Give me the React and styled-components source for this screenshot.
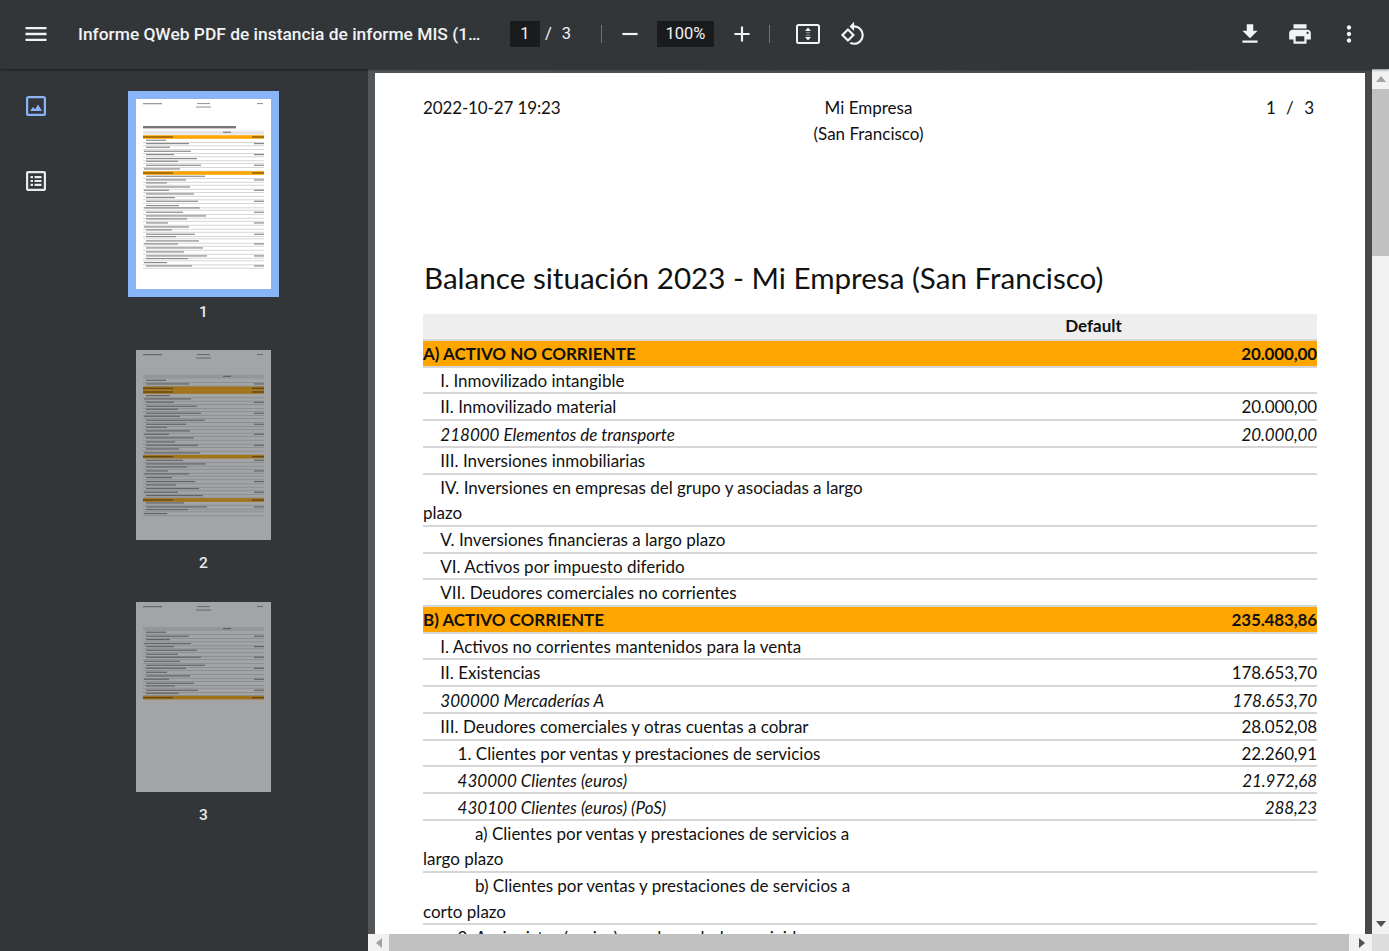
import React from 'react';
import styled, { createGlobalStyle } from 'styled-components';
import { MdMenu, MdRemove, MdAdd, MdRotate90DegreesCcw, MdFileDownload, MdPrint, MdMoreVert } from 'react-icons/md';

const GlobalStyle = createGlobalStyle`
  html, body { margin: 0; height: 100%; overflow: hidden; background: #323639; }
`;

const Viewer = styled.div`
  height: 951px;
  display: flex;
  flex-direction: column;
  font-family: Roboto, sans-serif;
  color: #f1f3f4;
`;

const Toolbar = styled.header`
  height: 69px;
  box-sizing: border-box;
  padding-bottom: 2px;
  flex: none;
  display: flex;
  align-items: center;
  background: #323639;
  box-shadow: 0 1px 2px rgba(0, 0, 0, 0.45);
  position: relative;
  z-index: 2;
`;

const IconSlot = styled.span`
  display: flex;
  flex: none;
  margin-left: ${p => p.$left || 0}px;
  font-size: ${p => p.$size || 26}px;
  color: #f1f3f4;
`;

const Title = styled.div`
  width: 403px;
  margin-left: 28px;
  flex: none;
  font-size: 17.4px;
  font-weight: 500;
  white-space: nowrap;
  overflow: hidden;
  text-overflow: ellipsis;
`;

const Field = styled.span`
  flex: none;
  width: ${p => p.$width}px;
  height: 26px;
  margin-left: ${p => p.$left}px;
  display: flex;
  align-items: center;
  justify-content: center;
  background: #191b1c;
  font-size: 16.5px;
`;

const PageCount = styled.span`
  flex: none;
  margin-left: 5px;
  width: 26px;
  display: flex;
  justify-content: space-between;
  font-size: 16.5px;
`;

const Divider = styled.span`
  flex: none;
  width: 1px;
  height: 18px;
  margin-left: ${p => p.$left}px;
  background: #6f7274;
`;

const Body = styled.div`
  flex: 1;
  min-height: 0;
  display: flex;
`;

const Sidebar = styled.aside`
  width: 368px;
  flex: none;
  display: flex;
  background: #323639;
`;

const SideTabs = styled.nav`
  width: 71px;
  flex: none;
  padding-top: 27px;
  display: flex;
  flex-direction: column;
  align-items: center;
  gap: 55px;
`;

const TabIcon = styled.svg`
  width: 20px;
  height: 20px;
  display: block;
`;

const ThumbList = styled.div`
  width: 265px;
  padding-top: 30px;
  display: flex;
  flex-direction: column;
  align-items: center;
  gap: 29px;
  color: #e8eaed;
`;

const ThumbItem = styled.div`
  display: flex;
  flex-direction: column;
  align-items: center;
`;

const ThumbFrame = styled.div`
  width: 135px;
  height: 190px;
  background: #fff;
  opacity: ${p => (p.$active ? 1 : 0.55)};
  outline: ${p => (p.$active ? '8px solid #8ab4f8' : 'none')};
`;

const ThumbNumber = styled.span`
  margin-top: 14px;
  margin-bottom: ${p => (p.$active ? 0 : 1)}px;
  font-size: 15.5px;
  font-weight: 500;
  line-height: 18px;
`;

const Stage = styled.main`
  flex: 1;
  min-width: 0;
  display: grid;
  grid-template-columns: 1fr 17px;
  grid-template-rows: 1fr 17px;
  background: #525659;
`;

const Scroller = styled.div`
  overflow: hidden;
  padding: 4px 0 0 7px;
  background: linear-gradient(90deg, #525659 0, #46494c 100%);
`;

const Page = styled.article`
  width: 990px;
  height: 900px;
  box-sizing: border-box;
  padding: 22px 48px 0;
  background: #fff;
  color: #111;
  font-family: Lato, sans-serif;
  font-size: 17px;
`;

const PageHead = styled.div`
  display: grid;
  grid-template-columns: 1fr 1fr 1fr;
  line-height: 25.5px;
`;

const HeadDate = styled.div`
  letter-spacing: -0.13px;
`;

const HeadCenter = styled.div`
  text-align: center;
  padding-right: 3px;
`;

const HeadRight = styled.div`
  text-align: right;
  padding-right: 3px;
  word-spacing: 6px;
`;

const DocTitle = styled.h1`
  margin: 112px 0 0 1px;
  font-size: 29.6px;
  line-height: 40px;
  font-weight: 400;
`;

const Sheet = styled.div`
  margin-top: 16px;
`;

const HeadRow = styled.div`
  display: flex;
  height: 25px;
  line-height: 23.5px;
  background: #eee;
  border-bottom: 2px solid #d6d6d6;
  font-weight: 700;
`;

const Row = styled.div`
  display: flex;
  line-height: 25.7px;
  border-bottom: 2px solid #d6d6d6;
  background: ${p => (p.$accent ? '#ffa500' : '#fff')};
  font-weight: ${p => (p.$accent ? 700 : 400)};
  font-style: ${p => (p.$italic ? 'italic' : 'normal')};
`;

const Label = styled.div`
  width: 50%;
  flex: none;
  padding-top: ${p => (p.$italic ? 1 : 0)}px;
  margin-bottom: ${p => (p.$italic ? -2 : -1)}px;
  text-indent: ${p => p.$level * 17.3}px;
`;

const Amount = styled.div`
  width: 50%;
  flex: none;
  text-align: right;
  letter-spacing: -0.15px;
  padding-top: ${p => (p.$italic ? 1 : 0)}px;
  margin-bottom: ${p => (p.$italic ? -2 : -1)}px;
`;

const DefaultCell = styled.div`
  width: 50%;
  margin-left: 50%;
  text-align: center;
`;

const Track = styled.div`
  background: #f1f1f1;
  display: flex;
  flex-direction: ${p => (p.$horizontal ? 'row' : 'column')};
  align-items: stretch;
`;

const Thumb = styled.div`
  background: #c1c1c1;
  ${p => (p.$horizontal ? 'width: 960px;' : 'height: 167px;')}
`;

const Arrow = styled.div`
  flex: none;
  ${p => (p.$horizontal ? 'width: 21px;' : 'height: 20px;')}
  display: flex;
  align-items: center;
  justify-content: center;
  ${p => p.$end && (p.$horizontal ? 'margin-left: auto;' : 'margin-top: auto;')}
`;

const Corner = styled.div`
  background: #dcdcdc;
`;

const rows = [
  { label: 'A) ACTIVO NO CORRIENTE', value: '20.000,00', accent: true },
  { level: 1, label: 'I. Inmovilizado intangible' },
  { level: 1, label: 'II. Inmovilizado material', value: '20.000,00' },
  { level: 1, label: '218000 Elementos de transporte', value: '20.000,00', italic: true },
  { level: 1, label: 'III. Inversiones inmobiliarias' },
  { level: 1, label: 'IV. Inversiones en empresas del grupo y asociadas a largo plazo' },
  { level: 1, label: 'V. Inversiones financieras a largo plazo' },
  { level: 1, label: 'VI. Activos por impuesto diferido' },
  { level: 1, label: 'VII. Deudores comerciales no corrientes' },
  { label: 'B) ACTIVO CORRIENTE', value: '235.483,86', accent: true },
  { level: 1, label: 'I. Activos no corrientes mantenidos para la venta' },
  { level: 1, label: 'II. Existencias', value: '178.653,70' },
  { level: 1, label: '300000 Mercaderías A', value: '178.653,70', italic: true },
  { level: 1, label: 'III. Deudores comerciales y otras cuentas a cobrar', value: '28.052,08' },
  { level: 2, label: '1. Clientes por ventas y prestaciones de servicios', value: '22.260,91' },
  { level: 2, label: '430000 Clientes (euros)', value: '21.972,68', italic: true },
  { level: 2, label: '430100 Clientes (euros) (PoS)', value: '288,23', italic: true },
  { level: 3, label: 'a) Clientes por ventas y prestaciones de servicios a largo plazo' },
  { level: 3, label: 'b) Clientes por ventas y prestaciones de servicios a corto plazo' },
  { level: 2, label: '2. Accionistas (socios) por desembolsos exigidos' },
];

// y of the tiny rows, read off the preview at 3x
const previews = [
  {
    origin: 87,
    accent: [201, 309],
    ys: [212, 222, 233, 245, 255, 267, 275, 287, 298, 320, 331, 340, 352, 362, 373, 384, 395, 408, 415, 428, 439, 448, 460, 472, 481, 494, 501, 514, 523, 535, 547, 559, 567, 579, 589],
    head: 188,
    title: true,
  },
  {
    origin: 30,
    accent: [145, 156, 350, 480],
    ys: [122, 133, 168, 178, 188, 200, 209, 221, 230, 242, 254, 263, 274, 284, 295, 307, 317, 328, 340, 362, 373, 382, 394, 403, 414, 426, 436, 447, 458, 468, 490, 502, 510, 522],
    head: 110,
  },
  {
    origin: 21,
    accent: [308],
    ys: [113, 125, 135, 147, 156, 167, 179, 188, 200, 212, 221, 233, 244, 254, 266, 274, 287, 296],
    head: 102,
  },
];

function PagePreview({ data, id }) {
  const { origin, accent, ys, head, title } = data;
  const top = y => (y - origin) / 3;
  return (
    <svg width="135" height="190" viewBox="0 0 135 190" style={{ display: 'block' }}>
      <filter id={id}><feGaussianBlur stdDeviation="0.6" /></filter>
      <g filter={`url(#${id})`}>
        <rect x="7" y="4" width="19" height="1.3" fill="#999" />
        <rect x="61" y="4" width="13" height="1.1" fill="#999" />
        <rect x="60" y="7.5" width="15" height="1.1" fill="#999" />
        <rect x="121" y="4" width="6" height="1.1" fill="#999" />
        {title && <rect x="7" y="27" width="93" height="2.4" fill="#777" />}
        <rect x="7" y={top(head) - 2} width="121" height="4" fill="#e6e6e6" />
        <rect x="87" y={top(head) - 1} width="8" height="1.3" fill="#888" />
        {ys.map((y, i) => (
          <g key={y}>
            <rect x={i % 5 === 3 ? 8 : 10} y={top(y) - 1} width={20 + ((i * 23) % 42)} height="1.2" fill="#8a8a8a" />
            {i % 3 === 1 && <rect x="118" y={top(y) - 1} width="10" height="1.2" fill="#8a8a8a" />}
            <rect x="7" y={top(y) + 1.5} width="121" height="0.7" fill="#c4c4c4" />
          </g>
        ))}
        {accent.map(y => (
          <g key={y}>
            <rect x="7" y={top(y) - 1.8} width="121" height="3.6" fill="#ffa500" />
            <rect x="7" y={top(y) - 0.7} width="30" height="1.4" fill="#8a5c00" />
            <rect x="116" y={top(y) - 0.7} width="12" height="1.4" fill="#8a5c00" />
          </g>
        ))}
      </g>
    </svg>
  );
}

function Triangle({ dir, color }) {
  const points = { up: '0,6 5,0 10,6', down: '0,0 10,0 5,6', left: '6,0 6,10 0,5', right: '0,0 0,10 6,5' };
  const horizontal = dir === 'left' || dir === 'right';
  return (
    <svg width={horizontal ? 6 : 10} height={horizontal ? 10 : 6}>
      <polygon points={points[dir]} fill={color} />
    </svg>
  );
}

function FitIcon() {
  return (
    <svg width="24" height="20" viewBox="0 0 24 20" fill="none">
      <rect x="1" y="1" width="22" height="18" rx="1.5" stroke="#f1f3f4" strokeWidth="2" />
      <path d="M12 3.6l3 3.4H9zM12 16.4L9 13h6z" fill="#f1f3f4" />
      <path d="M10 8.2h4v1h-4zM10 10.8h4v1h-4z" fill="#9a9c9e" />
    </svg>
  );
}

export default function App() {
  return (
    <Viewer>
      <GlobalStyle />
      <Toolbar>
        <IconSlot $left={22} $size={28}><MdMenu /></IconSlot>
        <Title>Informe QWeb PDF de instancia de informe MIS (1).pdf</Title>
        <Field $width={30} $left={29}>1</Field>
        <PageCount><span>/</span><span>3</span></PageCount>
        <Divider $left={30} />
        <IconSlot $left={15}><MdRemove /></IconSlot>
        <Field $width={57} $left={14}>100%</Field>
        <IconSlot $left={15}><MdAdd /></IconSlot>
        <Divider $left={14} />
        <IconSlot $left={26}><FitIcon /></IconSlot>
        <IconSlot $left={20}><MdRotate90DegreesCcw /></IconSlot>
        <IconSlot $left={371}><MdFileDownload /></IconSlot>
        <IconSlot $left={24}><MdPrint /></IconSlot>
        <IconSlot $left={23}><MdMoreVert /></IconSlot>
      </Toolbar>
      <Body>
        <Sidebar>
          <SideTabs>
            <TabIcon viewBox="0 0 20 20">
              <rect x="1.1" y="1.1" width="17.8" height="17.8" rx="1.5" fill="none" stroke="#8ab4f8" strokeWidth="2.2" />
              <path d="M4 15l3-4 2.2 2.2 2.8-4.7 4 6.5z" fill="#8ab4f8" />
            </TabIcon>
            <TabIcon viewBox="0 0 20 20">
              <rect x="1.1" y="1.1" width="17.8" height="17.8" rx="1" fill="none" stroke="#e8eaed" strokeWidth="2.2" />
              <path d="M4.5 5H7v2.2H4.5zM8.5 5h7v2.2h-7zM4.5 8.9H7v2.2H4.5zM8.5 8.9h7v2.2h-7zM4.5 12.8H7V15H4.5zM8.5 12.8h7V15h-7z" fill="#e8eaed" />
            </TabIcon>
          </SideTabs>
          <ThumbList>
            {previews.map((data, i) => (
              <ThumbItem key={i}>
                <ThumbFrame $active={i === 0}>
                  <PagePreview data={data} id={`blur${i}`} />
                </ThumbFrame>
                <ThumbNumber $active={i === 0}>{i + 1}</ThumbNumber>
              </ThumbItem>
            ))}
          </ThumbList>
        </Sidebar>
        <Stage>
          <Scroller>
            <Page>
              <PageHead>
                <HeadDate>2022-10-27 19:23</HeadDate>
                <HeadCenter>Mi Empresa<br />(San Francisco)</HeadCenter>
                <HeadRight>1 / 3</HeadRight>
              </PageHead>
              <DocTitle>Balance situación 2023 - Mi Empresa (San Francisco)</DocTitle>
              <Sheet>
                <HeadRow><DefaultCell>Default</DefaultCell></HeadRow>
                {rows.map(row => (
                  <Row key={row.label} $accent={row.accent} $italic={row.italic}>
                    <Label $level={row.level || 0} $italic={row.italic}>{row.label}</Label>
                    <Amount $italic={row.italic}>{row.value}</Amount>
                  </Row>
                ))}
              </Sheet>
            </Page>
          </Scroller>
          <Track>
            <Arrow><Triangle dir="up" color="#a3a3a3" /></Arrow>
            <Thumb />
            <Arrow $end><Triangle dir="down" color="#505050" /></Arrow>
          </Track>
          <Track $horizontal>
            <Arrow $horizontal><Triangle dir="left" color="#a3a3a3" /></Arrow>
            <Thumb $horizontal />
            <Arrow $horizontal $end><Triangle dir="right" color="#505050" /></Arrow>
          </Track>
          <Corner />
        </Stage>
      </Body>
    </Viewer>
  );
}
